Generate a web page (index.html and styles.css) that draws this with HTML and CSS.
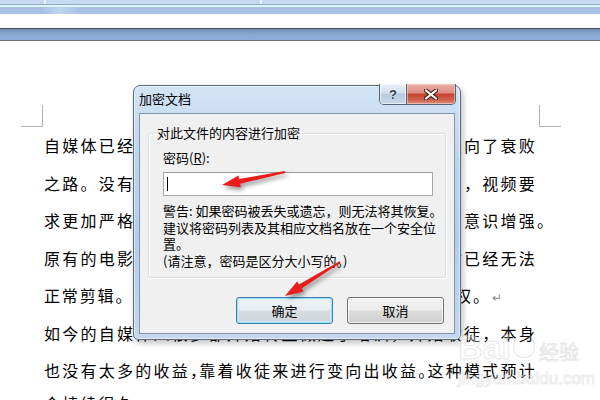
FILE: index.html
```html
<!DOCTYPE html>
<html lang="zh-CN">
<head>
<meta charset="utf-8">
<title>加密文档</title>
<link rel="stylesheet" href="styles.css">
</head>
<body>
<div class="chrome">
  <div class="tabs"><span class="tab t1"></span><span class="tab t2"></span><span class="tab t3"></span></div>
  <div class="hl"></div>
  <div class="band"></div>
</div>
<div class="ruler-bar"></div>
<div class="doc">
  <div class="marks"><span class="mark ml"></span><span class="mark mr"></span></div>
  <div class="lines">
    <p>自媒体已经发展了很多年，很多传统的媒体行业都走向了衰败</p>
    <p>之路。没有新意的内容越来越难以获得推荐和流量了，视频要</p>
    <p>求更加严格，平台对于内容的审核越来越严格，版权意识增强。</p>
    <p>原有的电影和电视剧片段因为版权的问题，很多素材已经无法</p>
    <p class="last-line">正常剪辑。否则就会被平台判定为侵犯了他人的著作权。<span class="pil">↵</span></p>
    <p>如今的自媒体人很多都开始转型做起了培训，开始收徒，本身</p>
    <p>也没有太多的收益<span class="cp">，</span>靠着收徒来进行变向出收益<span class="cp">。</span>这种模式预计</p>
    <p class="cut-line">会持续很久。</p>
  </div>
</div>

<div class="dialog">
  <div class="titlebar">
    <span class="title">加密文档</span>
    <div class="caption">
      <span class="cap help">?</span>
      <span class="cap close"><svg width="16" height="11" viewBox="0 0 16 11"><path d="M3 1.5 L13 9.5 M13 1.5 L3 9.5" stroke="#4b1e18" stroke-width="4.2" stroke-linecap="round"/><path d="M3 1.5 L13 9.5 M13 1.5 L3 9.5" stroke="#ffffff" stroke-width="2.2" stroke-linecap="round"/></svg></span>
    </div>
  </div>
  <div class="client">
    <fieldset class="group">
      <legend>对此文件的内容进行加密</legend>
      <div class="group-body">
        <div class="label">密码(<u>R</u>):</div>
        <div class="pwd"><span class="caret"></span></div>
        <div class="warn">
          <div class="wl w1">警告: 如果密码被丢失或遗忘，则无法将其恢复。</div>
          <div class="wl">建议将密码列表及其相应文档名放在一个安全位</div>
          <div class="wl">置。</div>
          <div class="wl">(请注意，密码是区分大小写的。)</div>
        </div>
      </div>
    </fieldset>
    <div class="buttons">
      <span class="btn default">确定</span>
      <span class="btn">取消</span>
    </div>
  </div>
</div>

<svg class="arrows" width="600" height="400" viewBox="0 0 600 400">
  <polygon points="222,185 238.4,175.5 239.1,178.95 284.8,171 285.2,173 240.1,183.85 240.8,187.3" fill="#ea1c1c"/>
  <polygon points="285,296 297.1,281.4 299,284.4 339.5,261.15 340.5,262.85 301.6,288.6 303.5,291.6" fill="#ea1c1c"/>
</svg>

<div class="watermark">
  <div class="wm-top"><span class="wm-bai">Bai</span><span class="wm-paw"></span><span class="wm-jy">经验</span></div>
  <div class="wm-url">jingyan.baidu.com</div>
</div>
</body>
</html>
```
FILE: styles.css
```css
html, body {
  margin: 0;
  padding: 0;
}
body {
  width: 600px;
  height: 400px;
  overflow: hidden;
  position: relative;
  background: #ffffff;
  font-family: "Noto Sans CJK SC", "Liberation Sans", sans-serif;
}

/* top window chrome */
.chrome {
  height: 14px;
  display: flex;
  flex-direction: column;
}
.tabs {
  height: 4px;
  display: flex;
  background: #c5d9f0;
}
.tab {
  height: 4px;
  box-sizing: border-box;
}
.t1 { width: 46px; border-right: 2px solid #eef4fb; }
.t2 { width: 216px; border-right: 2px solid #eef4fb; }
.t3 { flex: 1; }
.hl {
  height: 3px;
  box-sizing: border-box;
  border-top: 1px solid #8eabd2;
  background: #dff5fc;
}
.band {
  height: 7px;
  background: linear-gradient(to right, #a8c2e6 0, #a8c2e6 42px, #c0d4ee 60px, #a8c2e6 80px, #a8c2e6 100%);
}
.ruler-bar {
  margin-top: 14px;
  height: 13px;
  box-sizing: border-box;
  border-top: 1px solid #4e4f52;
  border-bottom: 1px solid #6c6d70;
  background: linear-gradient(#6f8cb8, #88a4cc 40%, #91addb);
}

/* document */
.doc {
  padding-top: 64px;
}
.marks {
  height: 22px;
  display: flex;
  justify-content: space-between;
  padding: 0 39px 0 21px;
}
.mark {
  width: 22px;
  height: 22px;
  box-sizing: border-box;
  border-bottom: 1px solid #b2b2b2;
}
.ml { border-right: 1px solid #b2b2b2; }
.mr { border-left: 1px solid #b2b2b2; }
.lines p {
  margin: 0;
  height: 37.5px;
  line-height: 37.5px;
  padding-left: 44px;
  font-size: 16px;
  letter-spacing: 2.26px;
  white-space: nowrap;
  color: #000;
}
.lines p.last-line {
  letter-spacing: 1.87px;
}
.lines p.cut-line {
  margin-top: -5px;
}
.cp {
  letter-spacing: -6.9px;
}
.pil {
  font-size: 12px;
  color: #8a8a8a;
  margin-left: 1px;
  letter-spacing: 0;
}

/* dialog */
.dialog {
  position: absolute;
  left: 133px;
  top: 85px;
  width: 328px;
  height: 255px;
  box-sizing: border-box;
  border: 1px solid #5d6b7e;
  border-radius: 7px 7px 5px 5px;
  background: linear-gradient(#d3e4f6, #bcd4ee 30%, #b2cdeb 60%, #c3d8f0);
  box-shadow: 0 0 0 1px rgba(255,255,255,0.5) inset, 2px 3px 6px rgba(0,0,0,0.25);
  display: flex;
  flex-direction: column;
  font-size: 13px;
}
.titlebar {
  height: 27px;
  display: flex;
  align-items: flex-start;
}
.title {
  align-self: center;
  padding-left: 5px;
  line-height: 16px;
  color: #000;
  margin-top: -1px;
}
.caption {
  margin-left: auto;
  margin-right: 4px;
  margin-top: -2px;
  height: 21px;
  display: flex;
  box-sizing: border-box;
  border: 1px solid #53637a;
  border-top: none;
  border-radius: 0 0 5px 5px;
  overflow: hidden;
}
.cap {
  height: 20px;
  display: flex;
  align-items: center;
  justify-content: center;
}
.help {
  width: 26px;
  border-right: 1px solid #53637a;
  background: linear-gradient(#e8eef6, #d3deec 45%, #b9cade 50%, #c9d8ea);
  font-family: "Liberation Sans", sans-serif;
  font-weight: bold;
  font-size: 13px;
  color: #2a3b52;
  text-shadow: 0 0 2px #ffffff, 0 0 1px #ffffff;
  box-shadow: inset 0 0 0 1px rgba(255,255,255,0.6);
}
.close {
  width: 48px;
  background: linear-gradient(#eab0a6, #dc8d80 45%, #c5412e 50%, #d06a58 85%, #e0998a);
  box-shadow: inset 0 0 0 1px rgba(255,220,210,0.5);
}
.client {
  flex: 1;
  margin: 0 5px 5px 5px;
  border: 1px solid #8194ad;
  background: #f0f0f0;
  padding: 11px 8px 0 8px;
  box-sizing: border-box;
}
.group {
  margin: 0;
  padding: 0;
  min-width: 0;
  border: 1px solid #d5dfe5;
  border-radius: 3px;
  box-shadow: inset 1px 1px 0 #ffffff, 1px 1px 0 #ffffff;
}
.group legend {
  margin-left: 6px;
  padding: 0 2px;
  line-height: 16px;
  color: #000;
}
.group-body {
  padding: 9px 0 8px 14px;
  color: #000;
}
.label {
  line-height: 16px;
}
.label u {
  text-underline-offset: 1px;
}
.pwd {
  margin-top: 6px;
  width: 270px;
  height: 24px;
  box-sizing: border-box;
  border: 1px solid #a3a6ad;
  border-top-color: #9a9ca2;
  background: #ffffff;
  display: flex;
}
.caret {
  margin: 4px 0 0 3px;
  width: 0;
  height: 14px;
  border-left: 1px solid #000;
}
.warn {
  margin-top: 7px;
  line-height: 16.5px;
}
.wl {
  white-space: nowrap;
}
.buttons {
  margin-top: 19px;
  margin-right: 2px;
  display: flex;
  justify-content: flex-end;
  gap: 14px;
}
.btn {
  width: 97px;
  height: 27px;
  box-sizing: border-box;
  border: 1px solid #707070;
  border-radius: 3px;
  background: linear-gradient(#f2f2f2 0%, #ebebeb 48%, #dddddd 52%, #cfcfcf 100%);
  box-shadow: inset 0 0 0 1px rgba(255,255,255,0.75);
  display: flex;
  align-items: center;
  justify-content: center;
  color: #000;
}
.btn.default {
  border-color: #3c7fb1;
  box-shadow: inset 0 0 0 1px #9fe0f8, inset 0 0 0 2px rgba(200,240,253,0.6);
  background: linear-gradient(#eef3f6 0%, #e6ecf0 48%, #d8dde2 52%, #cfd5da 100%);
}

/* annotation arrows */
.arrows {
  position: absolute;
  left: 0;
  top: 0;
  pointer-events: none;
  filter: drop-shadow(2px 3px 2px rgba(0,0,0,0.4));
}

/* watermark */
.watermark {
  position: absolute;
  left: 458px;
  top: 326px;
  font-family: "Liberation Sans", sans-serif;
  pointer-events: none;
}
.wm-top {
  display: flex;
  align-items: flex-end;
  height: 38px;
}
.wm-bai {
  font-size: 34px;
  font-weight: bold;
  line-height: 34px;
  color: rgba(255,255,255,0.3);
  -webkit-text-stroke: 1px rgba(200,200,200,0.45);
}
.wm-paw {
  width: 22px;
  height: 24px;
  margin: 0 4px 6px 2px;
  border-radius: 50% 50% 45% 45%;
  border: 1px solid rgba(200,200,200,0.45);
  box-sizing: border-box;
}
.wm-jy {
  font-family: "Noto Sans CJK SC", sans-serif;
  font-size: 20px;
  line-height: 24px;
  color: rgba(255,255,255,0.3);
  -webkit-text-stroke: 1px rgba(200,200,200,0.45);
}
.wm-url {
  margin-top: 6px;
  font-size: 17px;
  line-height: 18px;
  color: rgba(255,255,255,0.3);
  -webkit-text-stroke: 1px rgba(205,205,205,0.4);
}
```
